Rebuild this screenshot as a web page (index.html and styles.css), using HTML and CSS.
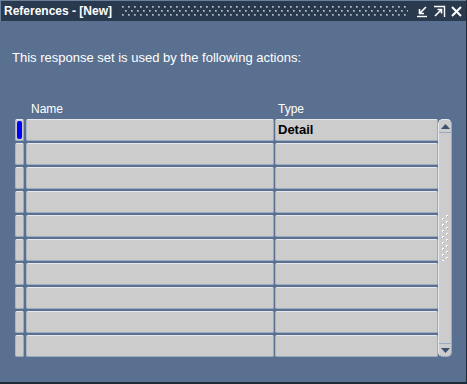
FILE: index.html
```html
<!DOCTYPE html>
<html>
<head>
<meta charset="utf-8">
<link rel="stylesheet" href="styles.css">
</head>
<body>
<div class="window">
  <div class="titlebar">
    <span class="title">References - [New]</span>
    <svg class="grip" height="12">
      <defs>
        <pattern id="gp" width="6" height="8" patternUnits="userSpaceOnUse">
          <rect x="0" y="0" width="2" height="2" fill="#7f8c9c"/>
          <rect x="0" y="0" width="1" height="1" fill="#c4ccd6"/>
          <rect x="3" y="4" width="2" height="2" fill="#7f8c9c"/>
          <rect x="3" y="4" width="1" height="1" fill="#c4ccd6"/>
        </pattern>
      </defs>
      <rect x="0" y="0" width="100%" height="10" fill="url(#gp)"/>
    </svg>
    <span class="wbtns">
      <svg class="wbtn" width="13" height="13" viewBox="0 0 13 13"><path d="M10 2 L4 8 M3.5 4 V8.5 H8" stroke="#fff" stroke-width="1.6" fill="none"/><path d="M1 11.5 H11" stroke="#fff" stroke-width="1.4"/></svg>
      <svg class="wbtn" width="13" height="13" viewBox="0 0 13 13"><path d="M1 1.5 H11.5 V12" stroke="#fff" stroke-width="1.4" fill="none"/><path d="M2 11 L8 5 M4.5 4.5 H8.5 V8.5" stroke="#fff" stroke-width="1.6" fill="none"/></svg>
      <svg class="wbtn" width="13" height="13" viewBox="0 0 13 13"><path d="M2 2 L11 11 M11 2 L2 11" stroke="#fff" stroke-width="2" fill="none"/></svg>
    </span>
  </div>
  <div class="content">
    <p class="intro">This response set is used by the following actions:</p>
    <div class="grid">
      <div class="heads">
        <span class="h-name">Name</span>
        <span class="h-type">Type</span>
      </div>
      <div class="body">
        <div class="rows">
          <div class="row"><span class="ind current"><i></i></span><span class="cell name"></span><span class="cell type bold">Detail</span></div>
          <div class="row"><span class="ind"></span><span class="cell name"></span><span class="cell type"></span></div>
          <div class="row"><span class="ind"></span><span class="cell name"></span><span class="cell type"></span></div>
          <div class="row"><span class="ind"></span><span class="cell name"></span><span class="cell type"></span></div>
          <div class="row"><span class="ind"></span><span class="cell name"></span><span class="cell type"></span></div>
          <div class="row"><span class="ind"></span><span class="cell name"></span><span class="cell type"></span></div>
          <div class="row"><span class="ind"></span><span class="cell name"></span><span class="cell type"></span></div>
          <div class="row"><span class="ind"></span><span class="cell name"></span><span class="cell type"></span></div>
          <div class="row"><span class="ind"></span><span class="cell name"></span><span class="cell type"></span></div>
          <div class="row"><span class="ind"></span><span class="cell name"></span><span class="cell type"></span></div>
        </div>
        <div class="scroll">
          <div class="arrow up"><svg width="9" height="5" viewBox="0 0 9 5"><path d="M0 5 L4.5 0 L9 5 Z" fill="#3c5070"/></svg></div>
          <div class="track">
            <svg class="dots" width="9" height="46">
              <defs>
                <pattern id="dp" width="9" height="6" patternUnits="userSpaceOnUse">
                  <rect x="5" y="0" width="2" height="2" fill="#ffffff"/>
                  <rect x="6" y="1" width="1" height="1" fill="#9aa8b8"/>
                  <rect x="1" y="3" width="2" height="2" fill="#ffffff"/>
                  <rect x="2" y="4" width="1" height="1" fill="#9aa8b8"/>
                </pattern>
              </defs>
              <rect width="9" height="46" fill="url(#dp)"/>
            </svg>
          </div>
          <div class="arrow down"><svg width="9" height="5" viewBox="0 0 9 5"><path d="M0 0 L4.5 5 L9 0 Z" fill="#3c5070"/></svg></div>
        </div>
      </div>
    </div>
  </div>
</div>
</body>
</html>
```

FILE: styles.css
```css
html, body {
  margin: 0;
  padding: 0;
  background: #5a7090;
}
.window {
  width: 466px;
  height: 382px;
  background: #5a7090;
  border-right: 1px solid #1e2a38;
  border-bottom: 2px solid #1e2a38;
  font-family: "Liberation Sans", Arial, sans-serif;
  font-size: 12px;
  color: #fff;
  display: flex;
  flex-direction: column;
}
.titlebar {
  background: #2a3a4e;
  display: flex;
  align-items: center;
  border-top: 1px solid #6a7f9a;
  border-left: 1px solid #6a7f9a;
  box-sizing: border-box;
  height: 21px;
}
.title {
  font-weight: bold;
  font-size: 12px;
  padding-left: 3px;
  white-space: nowrap;
}
.grip {
  flex: 1;
  display: block;
  margin: 1px 8px 0 10px;
}
.wbtns {
  display: flex;
  gap: 4px;
  padding-right: 3px;
  align-items: center;
}
.wbtn { display: block; }
.content {
  flex: 1;
  display: flex;
  flex-direction: column;
}
.intro {
  margin: 29px 0 0 12px;
  font-size: 13px;
  line-height: 16px;
  color: #fff;
}
.grid {
  margin: 36px 0 0 15px;
}
.heads {
  display: flex;
  height: 15px;
  line-height: 15px;
}
.h-name { margin-left: 16px; width: 247px; }
.body {
  display: flex;
  margin-top: 2px;
}
.rows {
  display: flex;
  flex-direction: column;
  gap: 2px;
}
.row {
  display: flex;
  height: 22px;
}
.ind, .cell {
  box-sizing: border-box;
  height: 22px;
  background: #cccccc;
  border: 1px solid #9aabc0;
  border-top-color: #e6e8ec;
  border-left-color: #a8b6c6;
  border-radius: 2px;
}
.ind {
  width: 9px;
  margin-right: 2px;
  padding: 1px;
}
.ind i {
  display: block;
  height: 18px;
  background: #0000ff;
  border-radius: 2px;
}
.cell.name { width: 248px; margin-right: 1px; }
.cell.type { width: 163px; }
.cell {
  color: #000;
  padding-left: 2px;
  line-height: 20px;
}
.bold { font-weight: bold; font-size: 13px; }
.scroll {
  width: 14px;
  height: 238px;
  box-sizing: border-box;
  background: #cccccc;
  border: 1px solid #e6e8ec;
  border-right-color: #9aabc0;
  border-bottom-color: #9aabc0;
  border-radius: 5px;
  display: flex;
  flex-direction: column;
}
.arrow {
  height: 12px;
  display: flex;
  align-items: center;
  justify-content: center;
}
.arrow.up { border-bottom: 1px solid #9aabc0; }
.arrow.down { border-top: 1px solid #9aabc0; }
.track {
  flex: 1;
  display: flex;
  align-items: center;
  justify-content: center;
}
.dots { display: block; }
```
